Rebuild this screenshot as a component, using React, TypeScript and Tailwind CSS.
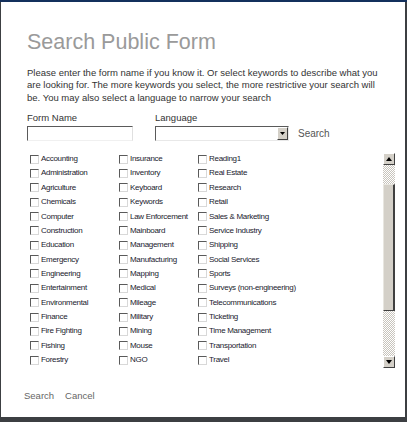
import React from "react";

const col1 = ["Accounting","Administration","Agriculture","Chemicals","Computer","Construction","Education","Emergency","Engineering","Entertainment","Environmental","Finance","Fire Fighting","Fishing","Forestry"];
const col2 = ["Insurance","Inventory","Keyboard","Keywords","Law Enforcement","Mainboard","Management","Manufacturing","Mapping","Medical","Mileage","Military","Mining","Mouse","NGO"];
const col3 = ["Reading1","Real Estate","Research","Retail","Sales & Marketing","Service Industry","Shipping","Social Services","Sports","Surveys (non-engineering)","Telecommunications","Ticketing","Time Management","Transportation","Travel"];

function Box() {
  return (
    <span className="block w-[9px] h-[9px] shrink-0 bg-white border-t border-l border-t-[#5a5a5a] border-l-[#5a5a5a] border-b border-r border-b-[#d8d8d8] border-r-[#d8d8d8]" />
  );
}

function Column({ items, width }: { items: string[]; width: string }) {
  return (
    <div className={`flex flex-col ${width}`}>
      {items.map((t) => (
        <div key={t} className="flex items-center h-[14.36px] gap-[2px]">
          <Box />
          <span className="text-[8px] leading-[10px] tracking-[-0.3px] text-[#22222e] whitespace-nowrap">{t}</span>
        </div>
      ))}
    </div>
  );
}

function Arrow({ up }: { up?: boolean }) {
  return (
    <div className="w-[12px] h-[12px] bg-[#d4d0c8] border border-t-white border-l-white border-b-[#404040] border-r-[#404040] flex items-center justify-center">
      <svg width="6" height="4" viewBox="0 0 6 4">
        {up ? <polygon points="0,4 6,4 3,0" fill="#000" /> : <polygon points="0,0 6,0 3,4" fill="#000" />}
      </svg>
    </div>
  );
}

export default function App() {
  return (
    <div className="w-[407px] h-[422px] bg-[#3c3f42] border-t-2 border-t-[#13305c] overflow-hidden" style={{ fontFamily: "'Liberation Sans', Arial, sans-serif" }}>
      <div className="ml-[1px] w-[404px] h-[415px] bg-white pl-[26px] flex flex-col">
        <div className="mt-[28px] text-[21.5px] leading-[24px] text-[#9a9a9a]">Search Public Form</div>
        <p className="mt-[13px] text-[9.5px] leading-[12.3px] text-[#333] pr-[20px]">
          Please enter the form name if you know it. Or select keywords to describe what you are looking for. The more keywords you select, the more restrictive your search will be. You may also select a language to narrow your search
        </p>
        <div className="mt-[8px] flex">
          <div className="w-[128px] flex flex-col">
            <span className="text-[9.5px] leading-[12px] text-[#333]">Form Name</span>
            <div className="mt-[2px] w-[106px] h-[15px] border-t border-l border-t-[#5a5a5a] border-l-[#5a5a5a] border-b border-r border-b-[#f0f0f0] border-r-[#e0e0e0]" />
          </div>
          <div className="flex flex-col">
            <span className="text-[9.5px] leading-[12px] text-[#333]">Language</span>
            <div className="mt-[2px] flex items-center">
              <div className="w-[134px] h-[15px] border-t border-l border-t-[#5a5a5a] border-l-[#5a5a5a] border-b border-r border-b-[#e8e8e8] border-r-[#e8e8e8] flex justify-end">
                <div className="w-[11px] h-[13px] bg-[#d4d0c8] border border-t-white border-l-white border-b-[#404040] border-r-[#404040] flex items-center justify-center">
                  <svg width="5" height="3" viewBox="0 0 5 3"><polygon points="0,0 5,0 2.5,3" fill="#000" /></svg>
                </div>
              </div>
              <span className="ml-[9px] mt-[2px] text-[10px] leading-[12px] text-[#555]">Search</span>
            </div>
          </div>
        </div>
        <div className="mt-[11px] flex">
          <div className="flex pl-[3px] w-[356px]">
            <Column items={col1} width="w-[89px]" />
            <Column items={col2} width="w-[79px]" />
            <Column items={col3} width="w-[180px]" />
          </div>
          <div className="mt-[1px] w-[12px] h-[215px] flex flex-col">
            <Arrow up />
            <div className="h-[19px] bg-[repeating-conic-gradient(#c8c4bc_0%_25%,#ffffff_0%_50%)] bg-[length:2px_2px]" />
            <div className="h-[127px] bg-[#d4d0c8] border border-t-[#e8e6e0] border-l-[#e8e6e0] border-b-[#404040] border-r-[#404040] border-r-2" />
            <div className="flex-1 bg-[repeating-conic-gradient(#c8c4bc_0%_25%,#ffffff_0%_50%)] bg-[length:2px_2px]" />
            <Arrow />
          </div>
        </div>
        <div className="mt-[22px] -ml-[3px] flex gap-[11px] text-[9.5px] leading-[12px] text-[#666]">
          <span>Search</span>
          <span>Cancel</span>
        </div>
      </div>
    </div>
  );
}
